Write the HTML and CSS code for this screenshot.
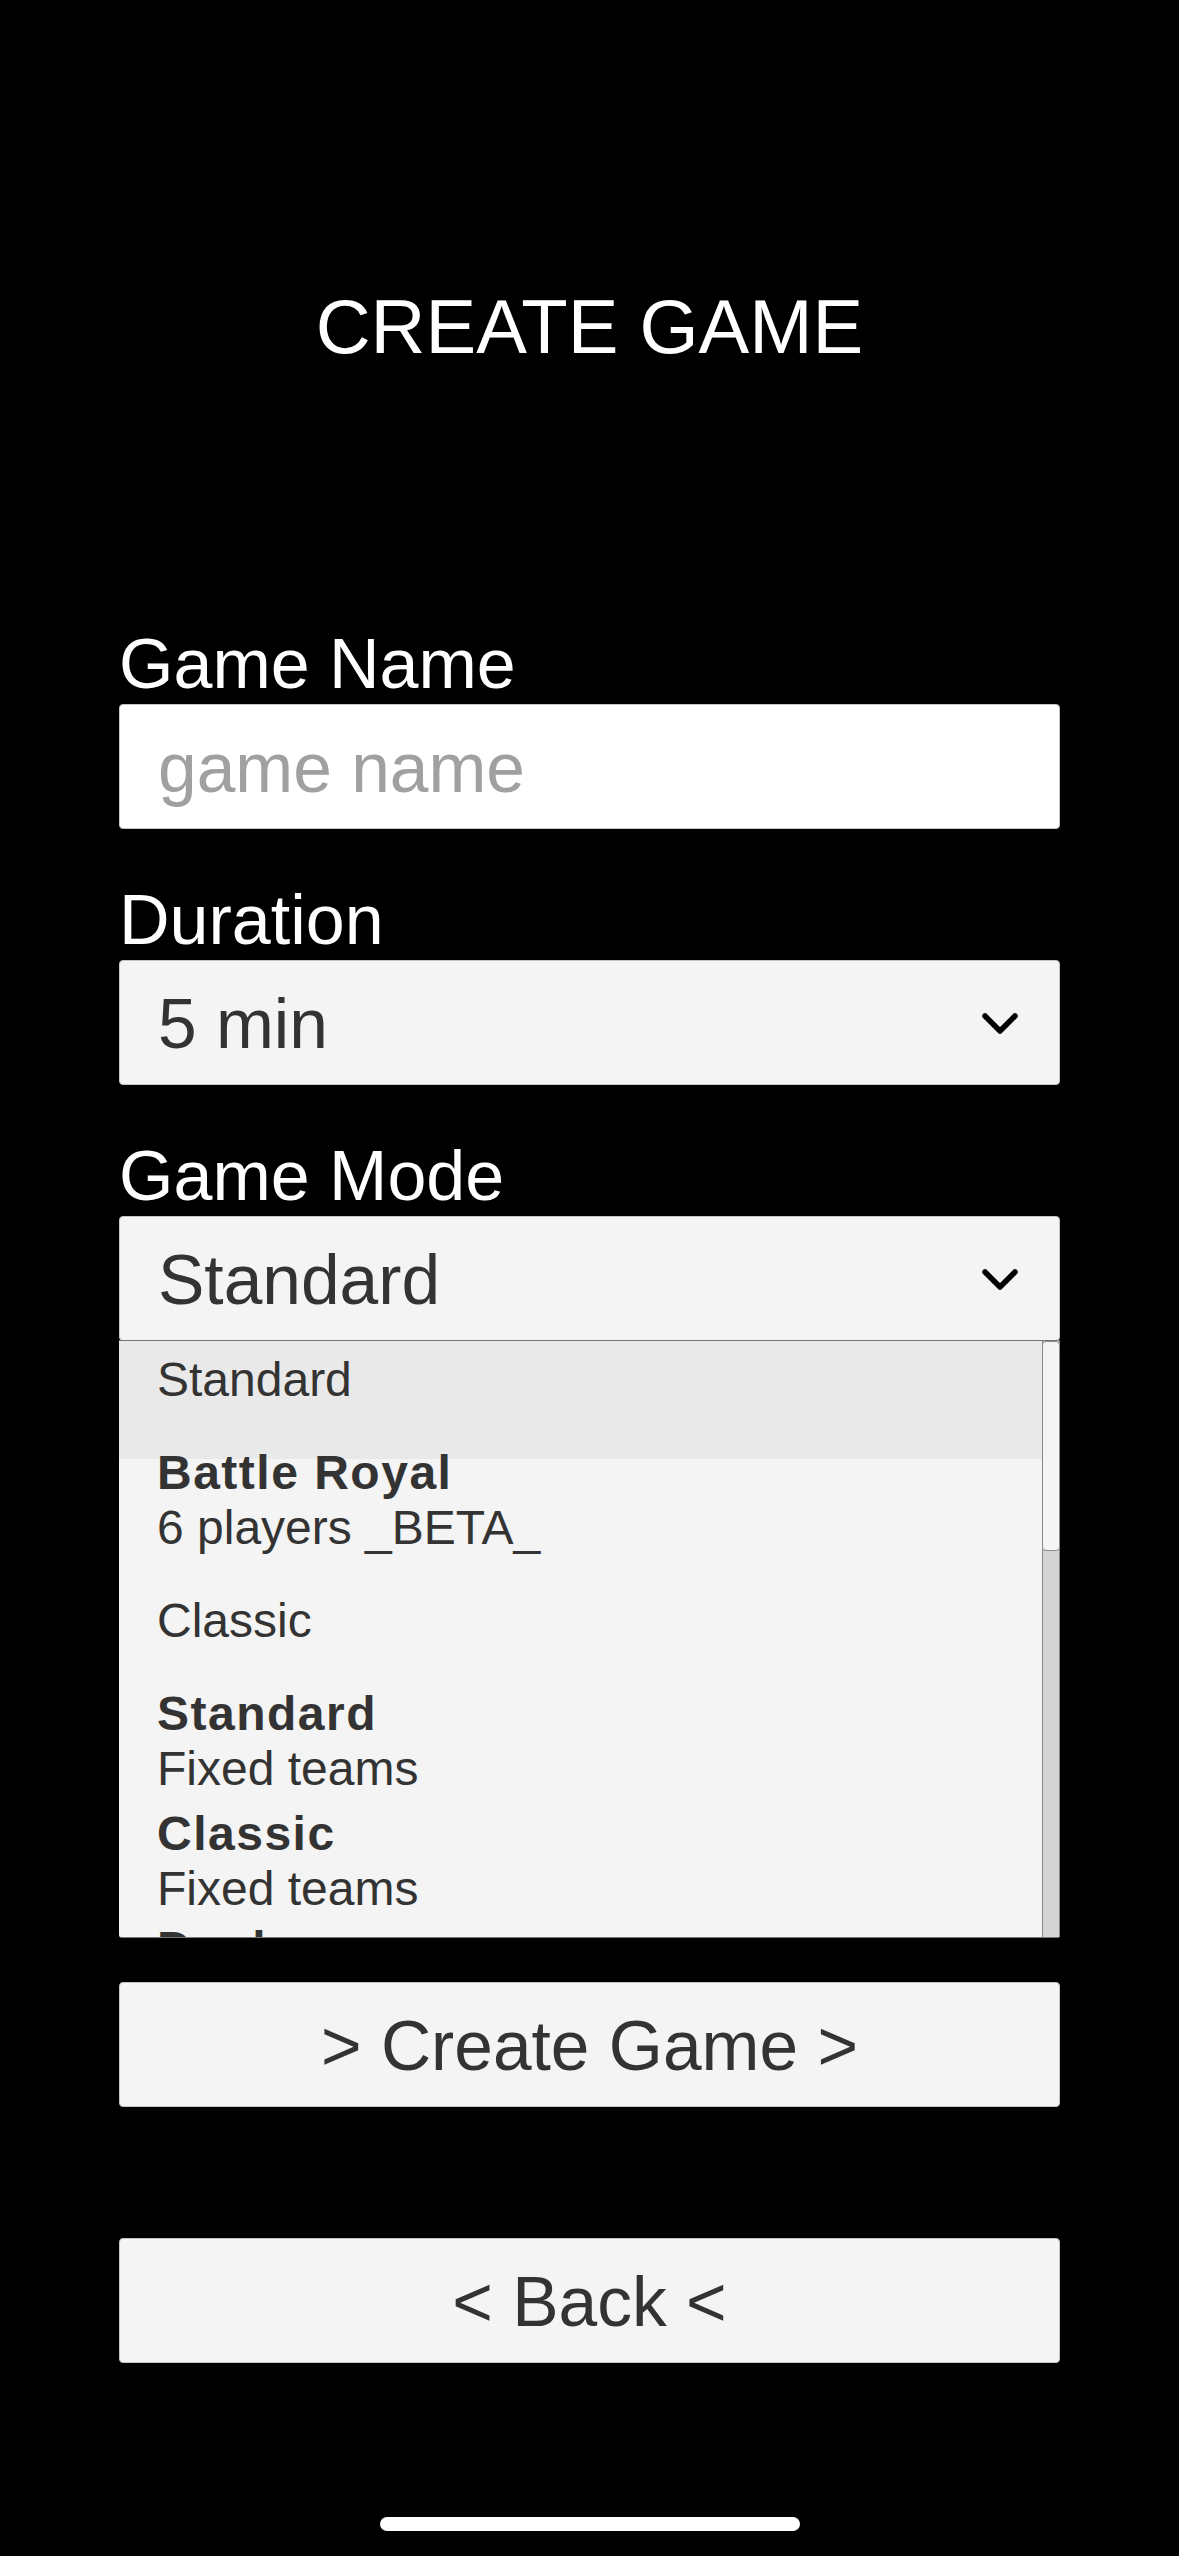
FILE: index.html
```html
<!DOCTYPE html>
<html lang="en">
<head>
<meta charset="utf-8">
<title>Create Game</title>
<link rel="stylesheet" href="styles.css">
</head>
<body>
<div class="page">
  <h1 class="title">CREATE GAME</h1>

  <form class="form">
    <div class="field">
      <label class="label" for="gname">Game Name</label>
      <input class="box input" id="gname" type="text" placeholder="game name">
    </div>

    <div class="field">
      <span class="label">Duration</span>
      <div class="box select">
        <span class="select-text">5 min</span>
        <svg class="chevron" viewBox="0 0 40 26" width="40" height="26"><polyline points="5,5 20,20 35,5" fill="none" stroke="#000" stroke-width="5.5" stroke-linecap="round" stroke-linejoin="round"/></svg>
      </div>
    </div>

    <div class="field">
      <span class="label">Game Mode</span>
      <div class="box select">
        <span class="select-text">Standard</span>
        <svg class="chevron" viewBox="0 0 40 26" width="40" height="26"><polyline points="5,5 20,20 35,5" fill="none" stroke="#000" stroke-width="5.5" stroke-linecap="round" stroke-linejoin="round"/></svg>
      </div>
      <div class="listbox">
        <div class="list-items">
          <div class="opt selected">Standard</div>
          <div class="group">
            <div class="group-label">Battle Royal</div>
            <div class="group-opt">6 players _BETA_</div>
          </div>
          <div class="opt">Classic</div>
          <div class="group">
            <div class="group-label">Standard</div>
            <div class="group-opt">Fixed teams</div>
          </div>
          <div class="group">
            <div class="group-label">Classic</div>
            <div class="group-opt">Fixed teams</div>
          </div>
          <div class="group">
            <div class="group-label">Duel</div>
            <div class="group-opt">Fixed teams</div>
          </div>
        </div>
        <div class="scroll-track"><div class="scroll-thumb"></div></div>
      </div>
    </div>

    <button type="button" class="btn btn-create">&gt; Create Game &gt;</button>
    <button type="button" class="btn btn-back">&lt; Back &lt;</button>
  </form>

  <div class="home-indicator"></div>
</div>
</body>
</html>
```
FILE: styles.css
```css
html, body {
  margin: 0;
  padding: 0;
  background: #000;
}

body {
  font-family: "Liberation Sans", Arial, sans-serif;
}

.page {
  position: relative;
  width: 1179px;
  height: 2556px;
  box-sizing: border-box;
  padding: 290px 119px 0;
  overflow: hidden;
}

.title {
  margin: 0;
  font-size: 76px;
  line-height: 74px;
  font-weight: 400;
  color: #fff;
  text-align: center;
}

.form {
  margin: 266px 0 0;
  display: flex;
  flex-direction: column;
}

.field + .field {
  margin-top: 57px;
}

.label {
  display: block;
  font-size: 70px;
  line-height: 68px;
  color: #fff;
  margin-bottom: 6px;
}

.box {
  display: flex;
  align-items: center;
  width: 100%;
  height: 125px;
  box-sizing: border-box;
  border: 1px solid #c4c4c4;
  border-radius: 4px;
  padding: 2px 39px 0 38px;
  margin: 0;
  font-family: "Liberation Sans", Arial, sans-serif;
  font-size: 69.5px;
  line-height: 68px;
  color: #333;
  background: #f4f4f4;
}

.input {
  background: #fff;
  outline: none;
}

.input::placeholder {
  color: #a0a0a0;
}

.select-text {
  flex: 1;
}

.chevron {
  display: block;
  flex: none;
}

.listbox {
  display: flex;
  height: 598px;
  margin-top: -1px;
  box-sizing: border-box;
  border-top: 1px solid #767676;
  border-bottom: 1px solid #767676;
  border-radius: 0 0 3px 3px;
  background: #f4f4f4;
  overflow: hidden;
}

.list-items {
  flex: 1;
  overflow: hidden;
  font-size: 48px;
  line-height: 55px;
  color: #333;
}

.opt {
  padding: 33px 0 33px 38px;
}

.opt.selected {
  padding-top: 11px;
  background: #e9e9e9;
  box-shadow: 0 19px 0 #e9e9e9;
}

.group {
  padding: 5px 0 5px 38px;
}

.group:last-child {
  padding-top: 0;
}

.group-label {
  font-weight: 700;
  letter-spacing: 1.5px;
}

.scroll-track {
  flex: none;
  width: 18px;
  box-sizing: border-box;
  border-left: 1px solid #8a8a8a;
  border-right: 1px solid #8a8a8a;
  background: #d4d4d4;
}

.scroll-thumb {
  height: 210px;
  margin: 0 -1px;
  box-sizing: border-box;
  border: 1px solid #8a8a8a;
  border-radius: 4px;
  background: #f4f4f4;
}

.btn {
  display: block;
  width: 100%;
  height: 125px;
  box-sizing: border-box;
  border: 1px solid #c4c4c4;
  border-radius: 4px;
  padding: 2px 0 0;
  background: #f4f4f4;
  font-family: "Liberation Sans", Arial, sans-serif;
  font-size: 69.5px;
  line-height: 68px;
  color: #333;
  text-align: center;
}

.btn-create {
  margin-top: 44px;
}

.btn-back {
  margin-top: 131px;
}

.home-indicator {
  position: absolute;
  left: 380px;
  top: 2517px;
  width: 420px;
  height: 14px;
  border-radius: 7px;
  background: #fff;
}
```
